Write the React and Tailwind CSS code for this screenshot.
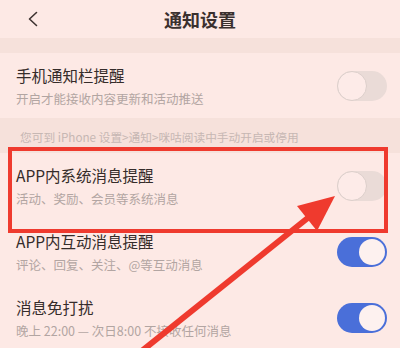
import React from "react";

function Toggle({ on }) {
  if (on) {
    return (
      <div className="relative w-[50px] h-[30px] rounded-full bg-[#4a6fd9] shrink-0">
        <div className="absolute right-[2px] top-[2px] w-[26px] h-[26px] rounded-full bg-[#fdf1ef]"></div>
      </div>
    );
  }
  return (
    <div className="relative w-[50px] h-[30px] rounded-full bg-[#eadbd7] shrink-0">
      <div className="absolute left-0 top-0 w-[30px] h-[30px] rounded-full bg-[#fdebe8] border border-[#dccfcb]"></div>
    </div>
  );
}

function Row({ title, sub, on, h }) {
  return (
    <div className={`flex items-center justify-between pl-4 pr-[13px] ${h}`}>
      <div className="flex flex-col">
        <div className="text-[15.5px] leading-[20px] text-[#352c2a]">{title}</div>
        <div className="text-[12.5px] leading-[16px] mt-[6px] text-[#b2a5a2]">{sub}</div>
      </div>
      <Toggle on={on} />
    </div>
  );
}

export default function App() {
  return (
    <div
      className="relative w-[400px] h-[348px] overflow-hidden bg-[#fde9e5]"
      style={{ fontFamily: '"Noto Sans CJK SC", "Noto Sans", sans-serif' }}
    >
      <div className="h-[38px] grid grid-cols-[1fr_auto_1fr] items-center">
        <div className="pl-[27px] flex items-center">
          <svg width="12" height="16" viewBox="0 0 12 16">
            <path d="M9.5 1.5 L2.5 8 L9.5 14.5" fill="none" stroke="#3d3331" strokeWidth="1.6" strokeLinecap="round" strokeLinejoin="round" />
          </svg>
        </div>
        <div className="text-[18px] font-bold text-[#3a302e] leading-none">通知设置</div>
        <div></div>
      </div>
      <div className="h-[15px] bg-[#f6e1db]"></div>
      <Row h="h-[65px]" title="手机通知栏提醒" sub="开启才能接收内容更新和活动推送" on={false} />
      <div className="h-[35px] bg-[#f6e1db] pl-5 pt-[11px] text-[11.7px] leading-[16px] text-[#c6b7b3]">
        您可到 iPhone 设置&gt;通知&gt;咪咕阅读中手动开启或停用
      </div>
      <Row h="h-[66px]" title="APP内系统消息提醒" sub="活动、奖励、会员等系统消息" on={false} />
      <Row h="h-[66px]" title="APP内互动消息提醒" sub="评论、回复、关注、@等互动消息" on={true} />
      <Row h="h-[66px]" title="消息免打扰" sub="晚上 22:00 — 次日8:00 不接收任何消息" on={true} />

      <div className="absolute left-[8px] top-[147px] w-[380px] h-[86px] border-[4px] border-[#ef3a2e]"></div>
      <svg className="absolute left-0 top-0" width="400" height="348" viewBox="0 0 400 348">
        <line x1="138" y1="354" x2="309" y2="217" stroke="#ef3a2e" strokeWidth="6" />
        <polygon points="335,196 317,231 297,206" fill="#ef3a2e" />
      </svg>
    </div>
  );
}
